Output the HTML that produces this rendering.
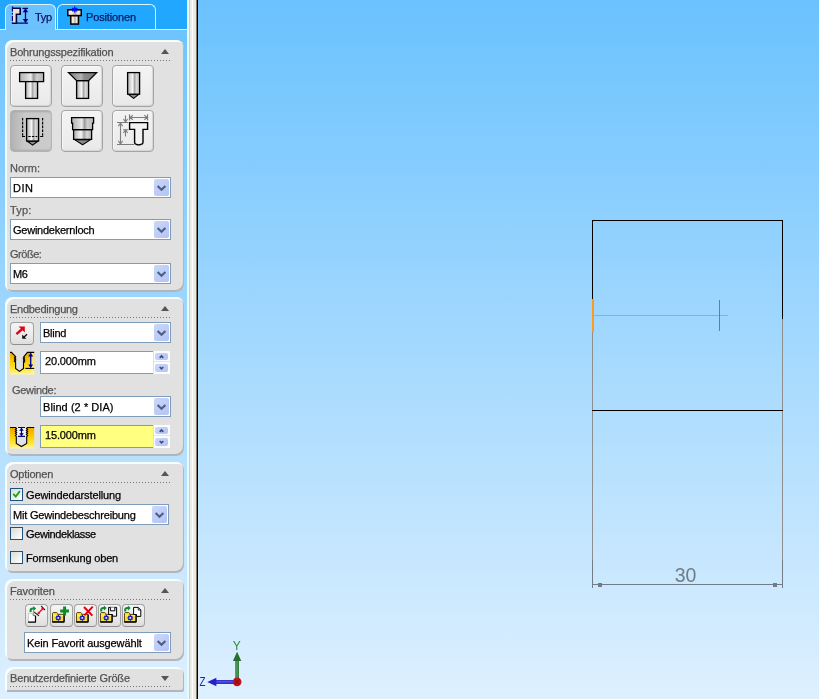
<!DOCTYPE html>
<html lang="de">
<head>
<meta charset="utf-8">
<title>Bohrungsspezifikation</title>
<style>
html,body{margin:0;padding:0}
body{width:819px;height:699px;overflow:hidden;position:relative;
 background:linear-gradient(180deg,#6ac2fe 0px,#def0fe 699px);
 font-family:"Liberation Sans",sans-serif;font-size:11px;line-height:13px;color:#000}
*{box-sizing:border-box}
.abs,.grp,.t,.combo,.inp,.dd,.hb,.tb,.cb,.spin,svg{position:absolute}
svg{overflow:visible}
.t{white-space:nowrap;height:13px;line-height:13px;will-change:transform;-webkit-text-stroke:0.25px currentColor}
/* tab strip */
#strip{left:0;top:0;width:187px;height:30px;background:#21a8fe}
#tabline{left:0;top:29px;width:188px;height:1px;background:#d8f7ff}
.tab{position:absolute;top:4px;height:25px;border:1px solid #d8f7ff;border-bottom:none;border-radius:6px 6px 0 0}
#tab1{left:5px;width:51px;background:#6bc2fe;height:26px}
#tab2{left:57px;width:99px;background:#21a8fe;height:25px}
.tabt{color:#0b1560}
/* divider */
#dv{left:187px;top:0;width:11px;height:699px;
 background:linear-gradient(90deg,#dffcff 0,#e6ffff 2px,#cfcbc9 2px,#cfcbc9 3px,#ece9e4 3px,#f2eeea 5px,#fffcff 5px,#fffcff 6px,#eeede4 6px,#e6e8d6 9px,#857b6c 9px,#857b6c 10px,#000 10px,#000 11px)}
/* groups */
.grp{left:5px;width:179px;background:#e1e1e1;border-radius:8px;
 box-shadow:inset 2px 2px 0 0 #f6ffff,inset -1px -2px 0 0 #b2b5ba}
.gt{left:4.5px;top:6px;color:#525252}
.dots{position:absolute;left:5px;top:20px;width:161px;height:1px;
 background:repeating-linear-gradient(90deg,#777 0,#777 1px,transparent 1px,transparent 3px)}
.tri{position:absolute;left:156px;top:9px;width:0;height:0;border-left:4.5px solid transparent;border-right:4.5px solid transparent;border-bottom:5px solid #555}
.tri.dn{border-bottom:none;border-top:5px solid #555}
.lb{color:#555}
/* combo */
.combo{height:21px;border:1px solid #7f9db9;background:#fff}
.combo .t{left:2px;top:4px}
.dd{right:1px;top:1px;width:15px;height:17px;border-radius:2px;background:linear-gradient(135deg,#cbd7fb,#b3c3f2)}
.dd svg{left:0;top:0}
.inp{height:23px;border:1px solid #7f9db9;border-right:none;background:#fff}
.inp .t{left:4px;top:3px}
.spin{width:16px;height:23px;background:#fbfcff}
.spin::after{content:"";position:absolute;left:0;top:10px;width:16px;height:1px;background:#e2e5ef}
.spin i{position:absolute;left:1px;width:13px;border-radius:2px;background:linear-gradient(135deg,#cbd7fb,#b3c3f2)}
/* hole buttons */
.hb{width:42px;height:42px;border:1px solid #a4a4a4;border-radius:4px;background:linear-gradient(180deg,#f3f3f3 0,#efefef 50%,#e9e9e9 100%);box-shadow:inset 1px 1px 0 0 #f8f8f8,inset -1px -1px 1px 0 #d4d4d4}
.hb.on{background:linear-gradient(90deg,#b2b2b2,#c9c9c9 35%,#cccccc);border-color:#b4b4b4;box-shadow:inset 0 2px 2px -1px #a6a6a6,inset 0 -2px 2px -1px #a8a8a8}
.hb svg{left:-1px;top:-1px}
.tb{width:23px;height:23px;border:1px solid #a2a2a2;border-bottom-color:#8e8e8e;border-radius:4px;background:linear-gradient(180deg,#f5f5f5,#ececec 50%,#dedede)}
.tb svg{left:-1px;top:-1px}
.cb{width:13px;height:13px;border:1px solid #1c5180;background:linear-gradient(135deg,#dcdcd5,#fff)}
</style>
</head>
<body>
<!-- ======= left panel ======= -->
<div id="strip" class="abs"></div>
<div id="tabline" class="abs"></div>
<div id="tab2" class="tab"></div>
<div id="tab1" class="tab"></div>
<span class="t tabt" style="letter-spacing:-0.25px;left:35px;top:11px">Typ</span>
<span class="t tabt" style="letter-spacing:-0.14px;left:86px;top:11px">Positionen</span>
<div id="dv" class="abs"></div>

<!-- group 1 -->
<div class="grp" style="top:40px;height:252px">
 <span class="t gt" style="letter-spacing:-0.2px">Bohrungsspezifikation</span><div class="tri"></div><div class="dots"></div>
 <div class="hb" style="left:5px;top:25px"></div>
 <div class="hb" style="left:56px;top:25px"></div>
 <div class="hb" style="left:107px;top:25px"></div>
 <div class="hb on" style="left:5px;top:70px"></div>
 <div class="hb" style="left:56px;top:70px"></div>
 <div class="hb" style="left:107px;top:70px"></div>
 <span class="t lb" style="left:5px;top:122px">Norm:</span>
 <div class="combo" style="left:5px;top:137px;width:161px"><span class="t" style="letter-spacing:0.5px">DIN</span><div class="dd"><svg width="15" height="17" viewBox="0 0 15 17"><path d="M3.6 6.9L7.5 10.8L11.4 6.9" fill="none" stroke="#4c5f84" stroke-width="2.1"/></svg></div></div>
 <span class="t lb" style="letter-spacing:0.2px;left:5px;top:164px">Typ:</span>
 <div class="combo" style="left:5px;top:179px;width:161px"><span class="t" style="letter-spacing:-0.24px">Gewindekernloch</span><div class="dd"><svg width="15" height="17" viewBox="0 0 15 17"><path d="M3.6 6.9L7.5 10.8L11.4 6.9" fill="none" stroke="#4c5f84" stroke-width="2.1"/></svg></div></div>
 <span class="t lb" style="letter-spacing:-0.46px;left:5px;top:208px">Größe:</span>
 <div class="combo" style="left:5px;top:223px;width:161px"><span class="t" style="letter-spacing:-0.5px">M6</span><div class="dd"><svg width="15" height="17" viewBox="0 0 15 17"><path d="M3.6 6.9L7.5 10.8L11.4 6.9" fill="none" stroke="#4c5f84" stroke-width="2.1"/></svg></div></div>
</div>

<!-- group 2 -->
<div class="grp" style="top:297px;height:159px">
 <span class="t gt" style="letter-spacing:-0.27px">Endbedingung</span><div class="tri"></div><div class="dots"></div>
 <div class="tb" style="left:5px;top:25px;width:24px"></div>
 <div class="combo" style="left:35px;top:25px;width:131px"><span class="t" style="letter-spacing:-0.25px">Blind</span><div class="dd"><svg width="15" height="17" viewBox="0 0 15 17"><path d="M3.6 6.9L7.5 10.8L11.4 6.9" fill="none" stroke="#4c5f84" stroke-width="2.1"/></svg></div></div>
 <div class="inp" style="left:35px;top:54px;width:113px"><span class="t" style="letter-spacing:-0.15px">20.000mm</span></div>
 <div class="spin" style="left:149px;top:54px"><i style="top:2px;height:7px"></i><i style="top:13px;height:8px"></i><svg width="16" height="23" viewBox="0 0 16 23" style="left:0;top:0"><path d="M5.7 6.9L7.5 5L9.3 6.9M5.7 16L7.5 17.9L9.3 16" fill="none" stroke="#3c487c" stroke-width="1.6"/></svg></div>
 <span class="t lb" style="letter-spacing:-0.29px;left:7px;top:87px">Gewinde:</span>
 <div class="combo" style="left:35px;top:99px;width:131px"><span class="t" style="letter-spacing:0.06px">Blind (2 * DIA)</span><div class="dd"><svg width="15" height="17" viewBox="0 0 15 17"><path d="M3.6 6.9L7.5 10.8L11.4 6.9" fill="none" stroke="#4c5f84" stroke-width="2.1"/></svg></div></div>
 <div class="inp" style="left:35px;top:128px;width:113px;background:#ffff80"><span class="t" style="letter-spacing:-0.15px">15.000mm</span></div>
 <div class="spin" style="left:149px;top:128px"><i style="top:2px;height:7px"></i><i style="top:13px;height:8px"></i><svg width="16" height="23" viewBox="0 0 16 23" style="left:0;top:0"><path d="M5.7 6.9L7.5 5L9.3 6.9M5.7 16L7.5 17.9L9.3 16" fill="none" stroke="#3c487c" stroke-width="1.6"/></svg></div>
</div>

<!-- group 3 -->
<div class="grp" style="top:462px;height:111px">
 <span class="t gt" style="letter-spacing:-0.19px">Optionen</span><div class="tri"></div><div class="dots"></div>
 <div class="cb" style="left:5px;top:26px"></div>
 <span class="t" style="letter-spacing:-0.12px;left:20.5px;top:27px">Gewindedarstellung</span>
 <div class="combo" style="left:5px;top:42px;width:159px"><span class="t" style="letter-spacing:-0.2px">Mit Gewindebeschreibung</span><div class="dd"><svg width="15" height="17" viewBox="0 0 15 17"><path d="M3.6 6.9L7.5 10.8L11.4 6.9" fill="none" stroke="#4c5f84" stroke-width="2.1"/></svg></div></div>
 <div class="cb" style="left:5px;top:65px"></div>
 <span class="t" style="letter-spacing:-0.37px;left:20.5px;top:66px">Gewindeklasse</span>
 <div class="cb" style="left:5px;top:89px"></div>
 <span class="t" style="letter-spacing:-0.17px;left:20.5px;top:90px">Formsenkung oben</span>
</div>

<!-- group 4 -->
<div class="grp" style="top:579px;height:82px">
 <span class="t gt" style="letter-spacing:-0.12px">Favoriten</span><div class="tri"></div><div class="dots"></div>
 <div class="tb" style="left:20px;top:25px"></div>
 <div class="tb" style="left:45px;top:25px"></div>
 <div class="tb" style="left:69px;top:25px"></div>
 <div class="tb" style="left:93px;top:25px"></div>
 <div class="tb" style="left:117px;top:25px"></div>
 <div class="combo" style="left:19px;top:53px;width:147px"><span class="t" style="letter-spacing:-0.12px">Kein Favorit ausgewählt</span><div class="dd"><svg width="15" height="17" viewBox="0 0 15 17"><path d="M3.6 6.9L7.5 10.8L11.4 6.9" fill="none" stroke="#4c5f84" stroke-width="2.1"/></svg></div></div>
</div>

<!-- group 5 -->
<div class="grp" style="top:667px;height:25px;border-radius:8px 8px 2px 2px">
 <span class="t gt" style="letter-spacing:-0.15px;top:5px">Benutzerdefinierte Größe</span><div class="tri dn" style="top:9px"></div><div class="dots" style="top:19px"></div>
</div>

<!-- ======= viewport ======= -->
<svg id="vp" style="left:0;top:0" width="819" height="699" viewBox="0 0 819 699" shape-rendering="crispEdges">
 <g fill="none" stroke-width="1">
  <path d="M592.5 332V588M782.5 319V588" stroke="#8e8e8e"/>
  <path d="M592.5 299V220.5H782.5V319" stroke="#000"/>
  <path d="M592 410.5H783" stroke="#000"/>
  <path d="M593 299V332" stroke="#ff9a1c" stroke-width="2"/>
  <path d="M594 315.5H728" stroke="#d8a057"/>
  <path d="M719.5 300V331" stroke="#4c86b8"/>
  <path d="M593 584.5H782" stroke="#717d86"/>
  <path d="M592.5 560V588M782.5 560V588" stroke="#717d86"/>
 </g>
 <rect x="598" y="583" width="4" height="4" fill="#717d86"/>
 <rect x="773" y="583" width="4" height="4" fill="#717d86"/>
 <text x="685.5" y="582" text-anchor="middle" font-family="Liberation Sans, sans-serif" font-size="19.5" fill="#717d86" shape-rendering="auto">30</text>

 <!-- triad -->
 <g shape-rendering="auto">
  <path d="M216 682H234" stroke="#2020c4" stroke-width="3.8"/><path d="M216 681.8H234" stroke="#5a5ae6" stroke-width="1.4"/>
  <path d="M207.3 682L216.4 677.8V686.2Z" fill="#2222c8"/>
  <path d="M237.1 661V679" stroke="#22702c" stroke-width="3.6"/><path d="M237 661V679" stroke="#5ca866" stroke-width="1.3"/>
  <path d="M237.1 651.8L241.3 661H232.9Z" fill="#256f2f"/>
  <circle cx="237.1" cy="681.8" r="4.4" fill="#c4121c"/><path d="M234.6 679.3l5 5M239.6 679.3l-5 5" stroke="#8e0a12" stroke-width="1.2" fill="none"/>
  <text x="236.7" y="649.8" text-anchor="middle" font-family="Liberation Sans, sans-serif" font-size="12" fill="#2e8a3a">Y</text>
  <text x="199.6" y="686" textLength="6" lengthAdjust="spacingAndGlyphs" font-family="Liberation Sans, sans-serif" font-size="12" fill="#2222c8">Z</text>
 </g>
</svg>

<!-- ======= icons overlay ======= -->
<svg id="ic" style="left:0;top:0" width="198" height="699" viewBox="0 0 198 699">
 <defs>
  <linearGradient id="mt" x1="0" x2="1" y1="0" y2="0">
   <stop offset="0" stop-color="#a9a9a9"/><stop offset=".22" stop-color="#d6d6d6"/><stop offset=".42" stop-color="#f6f6f6"/>
   <stop offset=".58" stop-color="#a6a6a6"/><stop offset=".74" stop-color="#d8d8d8"/><stop offset="1" stop-color="#b0b0b0"/>
  </linearGradient>
  <linearGradient id="mh" x1="0" x2="1" y1="0" y2="0">
   <stop offset="0" stop-color="#b2b2b2"/><stop offset=".3" stop-color="#d2d2d2"/><stop offset=".47" stop-color="#ececec"/>
   <stop offset=".58" stop-color="#9c9c9c"/><stop offset=".72" stop-color="#cfcfcf"/><stop offset="1" stop-color="#b4b4b4"/>
  </linearGradient>
  <linearGradient id="md" x1="0" x2="1" y1="0" y2="0">
   <stop offset="0" stop-color="#7c7c7c"/><stop offset=".45" stop-color="#b4b4b4"/><stop offset=".55" stop-color="#8c8c8c"/><stop offset="1" stop-color="#7a7a7a"/>
  </linearGradient>
  <linearGradient id="mb" x1="0" x2="1" y1="0" y2="0">
   <stop offset="0" stop-color="#e4d6c8"/><stop offset=".3" stop-color="#fbf4ee"/><stop offset=".55" stop-color="#b9aea6"/><stop offset=".75" stop-color="#f3ebe2"/><stop offset="1" stop-color="#d8cbbd"/>
  </linearGradient>
  <linearGradient id="gd" x1="0" x2="0" y1="0" y2="1">
   <stop offset="0" stop-color="#eea400"/><stop offset=".45" stop-color="#fbd000"/><stop offset=".8" stop-color="#ffe94a"/><stop offset="1" stop-color="#fff6a8"/>
  </linearGradient>
  <g id="fold">
   <path d="M0.5 9.8V1.2L1.2 0.5H4.8L5.6 1.3V2.4H12V9.8Z" fill="#f5dd3a" stroke="#4a3c00" stroke-width=".9"/>
   <path d="M1.2 3.2H11.4V4.2H1.2Z" fill="#fff3a0"/>
   <path d="M0.2 10H12.4M12.1 2.6V10" stroke="#000" stroke-width="1.3" fill="none"/>
   <path d="M6.3 3.1v5.6M3.5 5.9h5.6M4.3 3.9l4 4M8.3 3.9l-4 4" stroke="#1212cc" stroke-width="1.3" fill="none"/>
   <circle cx="6.3" cy="5.9" r="1.9" fill="#1616dc"/>
   <circle cx="6.3" cy="5.9" r=".95" fill="#fff"/>
  </g>
  <g id="garr"><path d="M1.2 6V4.4Q1.2 2.6 3.2 2.6H4.4" fill="none" stroke="#128a34" stroke-width="2"/><path d="M3.9 0L6.7 2.6L3.9 5.2Z" fill="#128a34"/></g>
 </defs>

 <!-- tab icon 1 -->
 <g>
  <path d="M12.5 6.5V25" stroke="#00007a" stroke-width="1.3" stroke-dasharray="5 1.5 1.5 1.5" fill="none"/>
  <path d="M13 8.2H20.2V14.2H16.4V23.2H13Z" fill="#efe2da" stroke="none"/>
  <path d="M12.5 8.2H20.2V14.2H16.4V23.2H12.5" fill="none" stroke="#04043c" stroke-width="1.6"/>
  <path d="M16.4 23.2H28M22.5 8.3H28" stroke="#04045a" stroke-width="1.3" fill="none"/>
  <path d="M25.5 9V22.5" stroke="#00008c" stroke-width="1.3"/>
  <path d="M25.5 8.3L28.3 12.3H22.7ZM25.5 23L28.3 19H22.7Z" fill="#00008c"/>
 </g>
 <!-- tab icon 2 -->
 <g>
  <rect x="67.75" y="9.75" width="13.5" height="5.8" fill="url(#mb)" stroke="#000" stroke-width="1.5"/>
  <rect x="70.75" y="15.75" width="7.7" height="8.3" fill="url(#mb)" stroke="#000" stroke-width="1.5"/>
  <path d="M74.7 6.6v6M72.1 8.1l5.2 3M77.3 8.1l-5.2 3" stroke="#0418ee" stroke-width="1.5" fill="none"/>
  <rect x="73.6" y="8.4" width="2.3" height="2.4" fill="#0418ee"/>
 </g>

 <!-- hole button 1: counterbore -->
 <g transform="translate(10,65)">
  <rect x="15.6" y="16" width="12" height="17.4" fill="url(#mt)" stroke="#000" stroke-width="1.3"/>
  <rect x="9.6" y="7.6" width="24" height="9" fill="url(#mh)" stroke="#000" stroke-width="1.3"/>
 </g>
 <!-- hole button 2: countersink -->
 <g transform="translate(61,65)">
  <rect x="15.6" y="15.6" width="12" height="17.8" fill="url(#mt)" stroke="#000" stroke-width="1.3"/>
  <path d="M7.6 7.6H35.6L27.6 15.6H15.6Z" fill="url(#md)" stroke="#000" stroke-width="1.3" stroke-linejoin="miter"/>
 </g>
 <!-- hole button 3: drill -->
 <g transform="translate(112,65)">
  <path d="M16.4 29.4L21.6 33.4L26.8 29.4Z" fill="#8a8a8a" stroke="#000" stroke-width="1.1" stroke-linejoin="round"/>
  <rect x="15.6" y="7.6" width="12" height="21.6" fill="url(#mt)" stroke="#000" stroke-width="1.3"/>
 </g>
 <!-- hole button 4: tapped (pressed) -->
 <g transform="translate(10,110)">
  <path d="M17.4 31.2L22.6 35.1L27.8 31.2Z" fill="#8a8a8a" stroke="#000" stroke-width="1.1" stroke-linejoin="round"/>
  <rect x="16.6" y="8.6" width="12" height="22.4" fill="url(#mt)" stroke="#000" stroke-width="1.3"/>
  <path d="M12.6 8V26.9M32.6 8V26.9" stroke="#000" stroke-width="1.2" stroke-dasharray="2.6 1.2" fill="none"/>
  <path d="M12 26.5H15M30.2 26.5H33.2" stroke="#000" stroke-width="1.2" fill="none"/>
  <path d="M18.3 26.5H27.3" stroke="#000" stroke-width="1.1" stroke-dasharray="2.4 1.2" fill="none"/>
 </g>
 <!-- hole button 5: pipe tap -->
 <g transform="translate(61,110)">
  <path d="M13.6 29.6L21.6 34.8L29.6 29.6Z" fill="#8a8a8a" stroke="#000" stroke-width="1.1" stroke-linejoin="round"/>
  <rect x="12.6" y="19.6" width="18" height="9.8" fill="url(#mt)" stroke="#000" stroke-width="1.3"/>
  <path d="M10.6 7.6H32.6V13.2H31.6V19.6H11.6V13.2H10.6Z" fill="url(#mh)" stroke="#000" stroke-width="1.3"/>
 </g>
 <!-- hole button 6: legacy -->
 <g transform="translate(112,110)">
  <path d="M17.6 12.6H35.6V19.4H31V32.4Q31 34 29 34.4Q26.5 35.4 24.4 34.4Q22.6 34 22.6 32.4V19.4H17.6Z" fill="#f2f2f2" stroke="#000" stroke-width="1.4"/>
  <g stroke="#7c7c7c" stroke-width="1.1" fill="none">
   <path d="M5 12.5H16.3M5 34.5H22"/>
   <path d="M8.5 13V34M6.3 16.3L8.5 13L10.7 16.3M6.3 30.7L8.5 34L10.7 30.7"/>
   <path d="M13.5 5.5V12M11.4 9L13.5 12L15.6 9"/>
   <path d="M11 19.7H16.3M13.5 20V26.4M11.4 23L13.5 20L15.6 23"/>
   <path d="M17.5 4.2V10.5M35.6 4.2V10.5M18 7.5H35M20.8 5.3L18 7.5L20.8 9.7M32.4 5.3L35.2 7.5L32.4 9.7"/>
  </g>
 </g>

 <!-- reverse direction button icon -->
 <g>
  <path d="M16.4 334.2L22.2 329" stroke="#e60012" stroke-width="2.4" fill="none"/>
  <path d="M18.6 326.6H24.8V332.6Z" fill="#e60012"/>
  <path d="M27 334.3L23.6 337.4" stroke="#111" stroke-width="1.4" fill="none"/>
  <path d="M22.2 338.8V334.6L26.4 338.8Z" fill="#111"/>
 </g>

 <!-- depth icon (gold) -->
 <g>
  <path d="M10 352H11.5L15.5 356.5V368.5L19.5 371.5L23.5 368.5V356.5L27.5 352H34.2V374.6H10Z" fill="url(#gd)"/>
  <path d="M31.5 352.5H34.2V374.6H31.5Z" fill="#fff3a0" opacity=".7"/>
  <path d="M10 352.4H11.5L15.6 356.6l-1 .7l1 .7l-1 .7l1 .7l-1 .7l1 .7l-1 .7l1 .6V368.4L19.5 371.4L23.5 368.4V362.6l1-.6l-1-.7l1-.7l-1-.7l1-.7l-1-.7l1-.7l-1-.7L27.5 352.4H34.2" fill="none" stroke="#000" stroke-width="1.1"/>
  <path d="M25.3 368.4H34.2" stroke="#000" stroke-width="1.1"/>
  <path d="M30.7 353.5V367.5" stroke="#00009a" stroke-width="1.3"/>
  <path d="M30.7 352.9L33.2 356.4H28.2ZM30.7 368L33.2 364.5H28.2Z" fill="#00009a"/>
 </g>

 <!-- thread depth icon (gold) -->
 <g>
  <path d="M10 427H16V443.6L21.5 446.7L27 443.6V427H34.2V448.6H10Z" fill="url(#gd)"/>
  <path d="M16 427H27V436.4H16Z" fill="#f4f4fa"/>
  <path d="M16.3 436.4H26.7V443.5L21.5 446.4L16.3 443.5Z" fill="#e2e2e4"/>
  <path d="M10 427.5H15.6L16.6 428.5L15.4 429.5L16.6 430.5L15.4 431.5L16.6 432.5L15.4 433.5L16.6 434.5L15.4 435.5L16.3 436.4V443.5L21.5 446.5L26.7 443.5V436.4L27.6 435.5L26.4 434.5L27.6 433.5L26.4 432.5L27.6 431.5L26.4 430.5L27.6 429.5L26.4 428.5L27.4 427.5H34.2" fill="none" stroke="#000" stroke-width="1.1"/>
  <path d="M18 427.5H25M18 436.4H25M21.5 428V436" stroke="#00007a" stroke-width="1.2" fill="none"/>
  <path d="M21.5 427.8L23.8 430.8H19.2ZM21.5 436.2L23.8 433.2H19.2Z" fill="#00007a"/>
 </g>

 <!-- check mark -->
 <path d="M13.3 493.9L15.7 496.6L19.9 491.2" fill="none" stroke="#22a022" stroke-width="1.9"/>

 <!-- favorites toolbar icons -->
 <g transform="translate(25,604)">
  <use href="#garr" x="4.4" y="2"/>
  <path d="M3.4 9.4H8.2L10.4 11.6V18H3.4Z" fill="#fff" stroke="#b0b0b0" stroke-width=".6"/>
  <path d="M8.2 9.4V11.6H10.4" fill="none" stroke="#555" stroke-width=".8"/>
  <path d="M3.1 18.1H10.9M10.5 11.7V18.1" fill="none" stroke="#000" stroke-width="1.2"/>
  <path d="M8.4 7.6L14 11.8M16.1 2L20 6" stroke="#222" stroke-width="1.1" fill="none"/>
  <path d="M13.4 9.2L17.8 4.8" stroke="#e81420" stroke-width="1.4" fill="none"/>
  <path d="M12.4 10.2l.5-2.8l2.3 2.3ZM18.8 3.8l-.5 2.8l-2.3-2.3Z" fill="#e81420"/>
 </g>
 <g transform="translate(50,604)">
  <use href="#fold" x="2" y="8"/>
  <path d="M14.6 2.6V11.4M10.2 7H19" stroke="#0f8c22" stroke-width="3" fill="none"/>
 </g>
 <g transform="translate(74,604)">
  <use href="#fold" x="2" y="8"/>
  <path d="M10 3L18.4 11.6M18.8 2.6L10.4 11.4" stroke="#e40012" stroke-width="2" fill="none"/>
 </g>
 <g transform="translate(98,604)">
  <use href="#fold" x="2" y="8"/>
  <use href="#garr" x="2" y="1.5"/>
  <path d="M10.6 3.4H18.6V12.2H14.5V10.5H10.6Z" fill="#f4f4f4" stroke="#000" stroke-width="1"/>
  <path d="M12.4 3.4V6.8H16.8V3.4" fill="#fff" stroke="#000" stroke-width="1"/>
 </g>
 <g transform="translate(122,604)">
  <use href="#fold" x="2" y="8"/>
  <use href="#garr" x="2" y="1.5"/>
  <path d="M11.6 3.4H16.2L18.8 6V12.4H14.5V10.5H11.6Z" fill="#fff" stroke="#000" stroke-width="1"/>
  <path d="M16.2 3.4V6H18.8" fill="none" stroke="#000" stroke-width=".8"/>
 </g>

</svg>
</body>
</html>
